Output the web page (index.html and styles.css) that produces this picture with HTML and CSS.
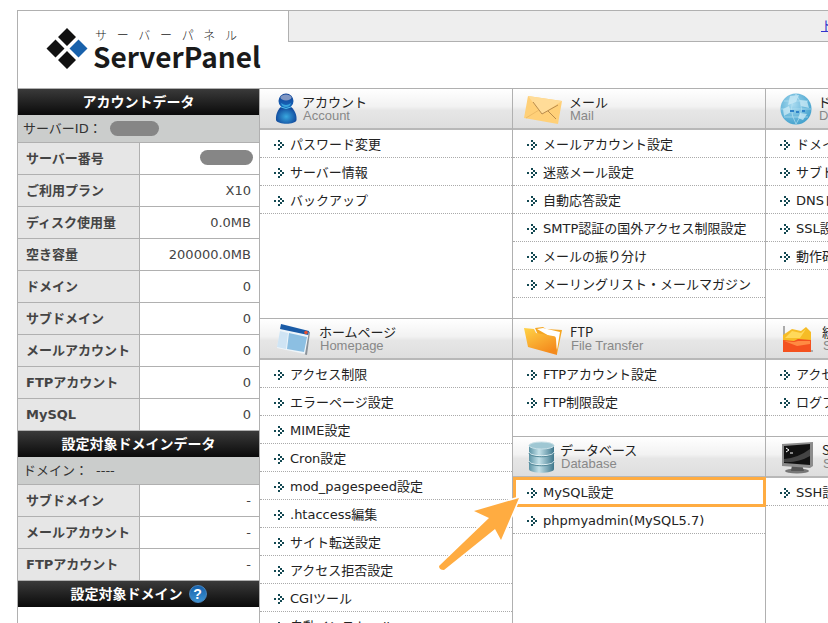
FILE: index.html
```html
<!DOCTYPE html>
<html lang="ja">
<head>
    <meta charset="UTF-8">
    <meta name="viewport" content="width=device-width, initial-scale=1.0">
    <title>ServerPanel</title>
    <link rel="stylesheet" href="styles.css">
</head>
<body>
<svg width="0" height="0" class="defs" aria-hidden="true">
    <symbol id="bullet" viewBox="0 0 10 10">
        <path fill="#134852" d="M0 4h2v2H0zM4 4h2v2H4zM4 0h2v2H4zM6 2h2v2H6zM8 4h2v2H8zM6 6h2v2H6zM4 8h2v2H4z"/>
    </symbol>
    <linearGradient id="blue" x1="0" y1="0" x2="0" y2="1"><stop offset="0" stop-color="#0d3f93"/><stop offset="1" stop-color="#1b6cc0"/></linearGradient>
    <radialGradient id="blueGlow" cx=".5" cy=".6" r=".6"><stop offset="0" stop-color="#39a8df"/><stop offset=".9" stop-color="#10479b"/></radialGradient>
    <radialGradient id="globe" cx=".4" cy=".35" r=".7"><stop offset="0" stop-color="#a9dbf0"/><stop offset="1" stop-color="#3f9fcc"/></radialGradient>
    <linearGradient id="folder" x1="0" y1="0" x2=".6" y2="1"><stop offset="0" stop-color="#ffd347"/><stop offset="1" stop-color="#f48a1d"/></linearGradient>
    <linearGradient id="disk"><stop offset="0" stop-color="#5b93a5"/><stop offset=".4" stop-color="#c5e2ea"/><stop offset="1" stop-color="#3e778c"/></linearGradient>
</svg>
<div class="page">
    <header class="header">
        <h1 class="logo">
            <svg width="40" height="40" viewBox="0 0 40 40" aria-hidden="true">
                <path fill="#111" d="M20 0l9 9-9 9-9-9zM8.500 11.500l9 9-9 9-9-9zM20 23l9 9-9 9-9-9z"/>
                <path fill="#1861ab" d="M31.500 11.500l9 9-9 9-9-9z"/>
            </svg>
            <span class="logo-text">
                <span class="logo-kana"><span>サ</span><span>ー</span><span>バ</span><span>ー</span><span>パ</span><span>ネ</span><span>ル</span></span>
                <span class="logo-name">ServerPanel</span>
            </span>
        </h1>
        <nav class="top-nav"><a href="#">トップ</a></nav>
    </header>

    <div class="main">
        <aside class="sidebar">
            <h2 class="side-title">アカウントデータ</h2>
            <p class="side-id">サーバーID：<span class="mask"></span></p>
            <table class="data">
                <tr><th>サーバー番号</th><td class="masked"><span class="mask mask-wide"></span></td></tr>
                <tr><th>ご利用プラン</th><td>X10</td></tr>
                <tr><th>ディスク使用量</th><td>0.0MB</td></tr>
                <tr><th>空き容量</th><td>200000.0MB</td></tr>
                <tr><th>ドメイン</th><td>0</td></tr>
                <tr><th>サブドメイン</th><td>0</td></tr>
                <tr><th>メールアカウント</th><td>0</td></tr>
                <tr><th>FTPアカウント</th><td>0</td></tr>
                <tr><th>MySQL</th><td>0</td></tr>
            </table>
            <h2 class="side-title">設定対象ドメインデータ</h2>
            <p class="side-id">ドメイン：<span>----</span></p>
            <table class="data">
                <tr><th>サブドメイン</th><td>-</td></tr>
                <tr><th>メールアカウント</th><td>-</td></tr>
                <tr><th>FTPアカウント</th><td>-</td></tr>
            </table>
            <h2 class="side-title">設定対象ドメイン <button type="button" class="help">?</button></h2>
        </aside>

        <div class="menus">
            <section class="menu">
                <div class="menu-head">
                    <svg width="26" height="40" viewBox="0 0 26 40" aria-hidden="true">
                        <path fill="url(#blueGlow)" d="M10 17h8c4 3 7 8 6.500 14-1 5-19 5-20.500 0C3.500 25 6 20 10 17z"/>
                        <circle cx="14" cy="12" r="7.500" fill="url(#blue)"/>
                        <ellipse cx="14" cy="8.500" rx="5.500" ry="3" fill="#8197c3"/>
                        <path fill="#38a5dd" d="M9 14q5 4 10 0q-1 4-5 4t-5-4z"/>
                        <path fill="none" stroke="#4fc0ea" d="M9 18q5 3 10 0"/>
                    </svg>
                    <h3>アカウント<small>Account</small></h3>
                </div>
                <ul>
                    <li><svg class="bullet"><use href="#bullet"/></svg><a href="#">パスワード変更</a></li>
                    <li><svg class="bullet"><use href="#bullet"/></svg><a href="#">サーバー情報</a></li>
                    <li><svg class="bullet"><use href="#bullet"/></svg><a href="#">バックアップ</a></li>
                </ul>
            </section>

            <section class="menu">
                <div class="menu-head">
                    <svg width="40" height="40" viewBox="0 0 40 40" aria-hidden="true">
                        <path fill="#ffd078" d="M3 7l34 5-4 23-34-6z"/>
                        <path fill="#ffdc98" d="M3 7l34 5-20 13z"/>
                        <path fill="none" stroke="#b98b4c" d="M8 13l9 12 16-9M23 22l8 8"/>
                        <path fill="none" stroke="#eebb66" d="M1 29l13-8"/>
                    </svg>
                    <h3>メール<small>Mail</small></h3>
                </div>
                <ul>
                    <li><svg class="bullet"><use href="#bullet"/></svg><a href="#">メールアカウント設定</a></li>
                    <li><svg class="bullet"><use href="#bullet"/></svg><a href="#">迷惑メール設定</a></li>
                    <li><svg class="bullet"><use href="#bullet"/></svg><a href="#">自動応答設定</a></li>
                    <li><svg class="bullet"><use href="#bullet"/></svg><a href="#">SMTP認証の国外アクセス制限設定</a></li>
                    <li><svg class="bullet"><use href="#bullet"/></svg><a href="#">メールの振り分け</a></li>
                    <li><svg class="bullet"><use href="#bullet"/></svg><a href="#">メーリングリスト・メールマガジン</a></li>
                </ul>
            </section>

            <section class="menu">
                <div class="menu-head">
                    <svg width="36" height="40" viewBox="0 0 36 40" aria-hidden="true">
                        <circle cx="18" cy="20" r="15.500" fill="url(#globe)"/>
                        <path fill="#d3eef8" opacity=".7" d="M12 7l9-1-3 7-8 3zM22 11l7 1 2 7-8-2zM5 20l6-3 2 6-7 4zM22 24l7 1-4 6-5-2z"/>
                        <path fill="none" stroke="#bfe6f5" opacity=".6" d="M18 5q-9 14 0 30M18 5q11 15 0 30M3 20h30M6 12h24M6 28h24"/>
                        <path fill="none" stroke="#2f82c9" stroke-width="2" d="M12 22h4M18 23h3M24 22h3"/>
                    </svg>
                    <h3>ドメイン<small>Domain</small></h3>
                </div>
                <ul>
                    <li><svg class="bullet"><use href="#bullet"/></svg><a href="#">ドメイン設定</a></li>
                    <li><svg class="bullet"><use href="#bullet"/></svg><a href="#">サブドメイン設定</a></li>
                    <li><svg class="bullet"><use href="#bullet"/></svg><a href="#">DNSレコード設定</a></li>
                    <li><svg class="bullet"><use href="#bullet"/></svg><a href="#">SSL設定</a></li>
                    <li><svg class="bullet"><use href="#bullet"/></svg><a href="#">動作確認URL</a></li>
                </ul>
            </section>

            <section class="menu menu-tall">
                <div class="menu-head">
                    <svg width="43" height="40" viewBox="0 0 43 40" aria-hidden="true">
                        <path fill="#8b9299" d="M10 6l28 7-3 23-2-.5z"/>
                        <path fill="#eef5fa" d="M9 5l28 7-4 23-28-6z"/>
                        <path fill="#1a5ba6" d="M9 5l28 7-.8 4L8 10z"/>
                        <path fill="#cfe4f4" d="M8 12l8 2-2 16-9-2z"/>
                        <path fill="#8cbfe2" d="M17 14l18 4-3 15-17-3z"/>
                        <circle cx="34" cy="13.500" r="1.800" fill="#e8502e"/>
                    </svg>
                    <h3>ホームページ<small>Homepage</small></h3>
                </div>
                <ul>
                    <li><svg class="bullet"><use href="#bullet"/></svg><a href="#">アクセス制限</a></li>
                    <li><svg class="bullet"><use href="#bullet"/></svg><a href="#">エラーページ設定</a></li>
                    <li><svg class="bullet"><use href="#bullet"/></svg><a href="#">MIME設定</a></li>
                    <li><svg class="bullet"><use href="#bullet"/></svg><a href="#">Cron設定</a></li>
                    <li><svg class="bullet"><use href="#bullet"/></svg><a href="#">mod_pagespeed設定</a></li>
                    <li><svg class="bullet"><use href="#bullet"/></svg><a href="#">.htaccess編集</a></li>
                    <li><svg class="bullet"><use href="#bullet"/></svg><a href="#">サイト転送設定</a></li>
                    <li><svg class="bullet"><use href="#bullet"/></svg><a href="#">アクセス拒否設定</a></li>
                    <li><svg class="bullet"><use href="#bullet"/></svg><a href="#">CGIツール</a></li>
                    <li><svg class="bullet"><use href="#bullet"/></svg><a href="#">自動インストール</a></li>
                </ul>
            </section>

            <section class="menu">
                <div class="menu-head">
                    <svg width="41" height="40" viewBox="0 0 41 40" aria-hidden="true">
                        <path fill="#f5a623" d="M10 9l8-1 3 2 16 1-5 24-12-3z"/>
                        <path fill="#fff" d="M12 10l6-1 17 4-3 18-6-13z"/>
                        <path fill="url(#folder)" d="M-1 9l10 1 2 4 17 3c2 0 3 1 3 3l1 16-29-8z"/>
                    </svg>
                    <h3>FTP<small>File Transfer</small></h3>
                </div>
                <ul>
                    <li><svg class="bullet"><use href="#bullet"/></svg><a href="#">FTPアカウント設定</a></li>
                    <li><svg class="bullet"><use href="#bullet"/></svg><a href="#">FTP制限設定</a></li>
                </ul>
            </section>

            <section class="menu">
                <div class="menu-head">
                    <svg width="40" height="40" viewBox="0 0 40 40" aria-hidden="true">
                        <path fill="none" stroke="#aaa" stroke-width="2" d="M6 7v25h29"/>
                        <path fill="#f6bc26" d="M5 24v-8l9-6 9 2 5-4 5 5v11z"/>
                        <path fill="#ffd95a" d="M7 19l7-7 9 2 5-4-6 9z"/>
                        <path fill="#f4511e" d="M5 21l11 1 4-2 13 1v12H5z"/>
                        <path fill="#ff8a42" d="M6 22l10 1 4-1 12 0v3l-13 2z"/>
                    </svg>
                    <h3>統計<small>Statistics</small></h3>
                </div>
                <ul>
                    <li><svg class="bullet"><use href="#bullet"/></svg><a href="#">アクセス解析</a></li>
                    <li><svg class="bullet"><use href="#bullet"/></svg><a href="#">ログファイル</a></li>
                </ul>
            </section>

            <section class="menu">
                <div class="menu-head">
                    <svg width="31" height="40" viewBox="0 0 31 40" aria-hidden="true">
                        <path fill="url(#disk)" d="M4 8h25v24c0 5-25 5-25 0z"/>
                        <path fill="none" stroke="#e3f1f5" d="M4 15c0 5 25 5 25 0M4 24c0 5 25 5 25 0"/>
                        <path fill="none" stroke="#528798" d="M4 16c0 5 25 5 25 0M4 25c0 5 25 5 25 0"/>
                        <ellipse cx="16.500" cy="8.500" rx="12.500" ry="3.500" fill="#9fc7d3" stroke="#c9e0e7"/>
                    </svg>
                    <h3>データベース<small>Database</small></h3>
                </div>
                <ul>
                    <li class="picked">
                        <svg class="bullet"><use href="#bullet"/></svg><a href="#">MySQL設定</a>
                        <svg class="pointer" width="90" height="84" viewBox="0 0 90 84" aria-hidden="true">
                            <path fill="#ffac41" stroke="#fff" stroke-width="3" paint-order="stroke" stroke-linejoin="round" d="M84 8L39 21l15 7L4 76q0 4 5 4l51-41 6 11z"/>
                        </svg>
                    </li>
                    <li><svg class="bullet"><use href="#bullet"/></svg><a href="#">phpmyadmin(MySQL5.7)</a></li>
                </ul>
            </section>

            <section class="menu">
                <div class="menu-head">
                    <svg width="40" height="40" viewBox="0 0 40 40" aria-hidden="true">
                        <ellipse cx="19" cy="34" rx="12" ry="2.500" fill="#777"/>
                        <path fill="#555" d="M14 28h10l2 6H13z"/>
                        <path fill="#8c8c8c" d="M4 7l31-2v24l-3 2-28-2z"/>
                        <path fill="#111" d="M6 9l26-2v21L6 26z"/>
                        <path fill="#444" d="M6 22q14-1 26-10v7q-12 7-26 6z"/>
                        <path fill="none" stroke="#fff" d="M8 11l3 2-3 2M12 16h3"/>
                    </svg>
                    <h3>SSH<small>SSH</small></h3>
                </div>
                <ul>
                    <li><svg class="bullet"><use href="#bullet"/></svg><a href="#">SSH設定</a></li>
                </ul>
            </section>
        </div>
    </div>
</div>
</body>
</html>
```

FILE: styles.css
```css
* {
    box-sizing: border-box;
}
body {
    margin: 0;
    padding: 10px 0 0 17px;
    height: 100vh;
    overflow: hidden;
    background-color: #fff;
    color: #333;
    font-family: "DejaVu Sans", "Noto Sans CJK JP", sans-serif;
    font-size: 13px;
    line-height: 20px;
}
h1, h2, h3, p, ul {
    margin: 0;
    padding: 0;
}
.defs {
    position: absolute;
}
.page {
    min-width: 1002px;
    border: 1px solid #b0b0b0;
}

/* header */
.header {
    display: flex;
    align-items: flex-start;
    border-bottom: 1px solid #b0b0b0;
}
.logo {
    display: flex;
    align-items: center;
    gap: 6px;
    width: 270px;
    height: 77px;
    padding: 0 0 4px 29px;
    font-weight: normal;
}
.logo svg {
    overflow: visible;
}
.logo-text {
    display: flex;
    flex-direction: column;
    color: #1a1a1a;
    font-family: "Noto Sans CJK JP", sans-serif;
}
.logo-kana {
    display: flex;
    justify-content: space-between;
    width: 144px;
    padding-left: 2px;
    font-size: 12px;
    font-weight: 300;
    line-height: 16px;
}
.logo-name {
    font-size: 28px;
    font-weight: bold;
    line-height: 26px;
}
.top-nav {
    flex: 1;
    height: 31px;
    padding: 5px 158px 0 0;
    border-left: 1px solid #b0b0b0;
    border-bottom: 1px solid #b0b0b0;
    background-color: #eee;
    text-align: right;
}
.top-nav a {
    color: #33c;
}

.main {
    display: flex;
}

/* sidebar */
.sidebar {
    width: 241px;
}
.side-title {
    display: flex;
    justify-content: center;
    align-items: center;
    gap: 6px;
    height: 26px;
    background: linear-gradient(#3a3a3a, #0a0a0a);
    color: #fff;
    font-size: 14px;
}
.help {
    width: 18px;
    height: 18px;
    padding: 0;
    border: 1px solid #4a86bf;
    border-radius: 50%;
    background: linear-gradient(#1560ab, #3c93d2);
    color: #fff;
    font-family: "Liberation Sans", sans-serif;
    font-size: 14px;
    font-weight: bold;
    line-height: 16px;
}
.side-id {
    display: flex;
    align-items: center;
    gap: 8px;
    height: 27px;
    padding-left: 5px;
    background-color: #cbcdcc;
}
.mask {
    display: inline-block;
    width: 49px;
    height: 15px;
    border-radius: 8px;
    background-color: #868686;
    vertical-align: middle;
}
.mask-wide {
    width: 53px;
}
.data {
    width: 100%;
    border-collapse: separate;
    border-spacing: 0;
    border-bottom: 1px solid #b0b0b0;
}
.data th, .data td {
    height: 32px;
    padding: 1px 8px 0 8px;
    border-top: 1px solid #b0b0b0;
    color: #444;
}
.data th {
    width: 122px;
    padding-right: 0;
    border-right: 1px solid #b0b0b0;
    background-color: #e6e6e6;
    text-align: left;
    white-space: nowrap;
}
.data td {
    text-align: right;
}
.data .masked {
    padding: 0 6px 4px;
}

/* menus */
.menus {
    flex: 1;
    display: grid;
    grid-template-columns: 253px 253px 1fr;
    grid-template-rows: auto auto 1fr;
    margin-top: -1px;
}
.menu {
    padding-bottom: 20px;
    border-left: 1px solid #b0b0b0;
}
.menu-tall {
    grid-row: 2 / 4;
}
.menu-head {
    display: flex;
    align-items: center;
    gap: 4px;
    height: 42px;
    padding-left: 12px;
    border-top: 1px solid #b0b0b0;
    border-bottom: 2px solid #b8b8b8;
    background: linear-gradient(#fff, #f2f2f2 45%, #e6e6e6 55%, #dedede);
}
.menu-head svg {
    overflow: visible;
}
.menu-head h3 {
    color: #222;
    font-family: "Noto Sans CJK JP", sans-serif;
    font-size: 13px;
    font-weight: normal;
    line-height: 14px;
}
.menu-head small {
    display: block;
    padding-left: 1px;
    color: #888;
    font-family: "Liberation Sans", sans-serif;
    font-size: 13px;
    line-height: 14px;
}
.menu ul {
    list-style: none;
}
.menu li {
    display: flex;
    align-items: center;
    gap: 6px;
    height: 28px;
    padding: 2px 0 0 14px;
    border-bottom: 1px dotted #aaa;
    white-space: nowrap;
}
.menu li a {
    color: #222;
    text-decoration: none;
}
.bullet {
    width: 10px;
    height: 10px;
}
.picked {
    position: relative;
    z-index: 1;
}
.picked::after {
    content: "";
    position: absolute;
    top: -1px;
    right: -1px;
    bottom: -2px;
    left: 0;
    border: 3px solid #ffac41;
}
.pointer {
    position: absolute;
    z-index: 1;
    top: 12px;
    left: -78px;
}
```
